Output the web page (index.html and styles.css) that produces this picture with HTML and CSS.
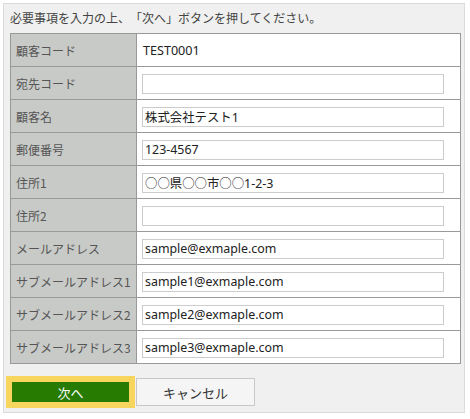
FILE: index.html
```html
<!DOCTYPE html>
<html lang="ja">
<head>
<meta charset="utf-8">
<link rel="stylesheet" href="styles.css">
</head>
<body>
<div class="panel">
  <p class="lead">必要事項を入力の上、「次へ」ボタンを押してください。</p>
  <table class="form">
    <tr><th>顧客コード</th><td><span class="static">TEST0001</span></td></tr>
    <tr><th>宛先コード</th><td><input class="field" type="text" value=""></td></tr>
    <tr><th>顧客名</th><td><input class="field" type="text" value="株式会社テスト1"></td></tr>
    <tr><th>郵便番号</th><td><input class="field" type="text" value="123-4567"></td></tr>
    <tr><th>住所1</th><td><input class="field" type="text" value="○○県○○市○○1-2-3"></td></tr>
    <tr><th>住所2</th><td><input class="field" type="text" value=""></td></tr>
    <tr><th>メールアドレス</th><td><input class="field" type="text" value="sample@exmaple.com"></td></tr>
    <tr><th>サブメールアドレス1</th><td><input class="field" type="text" value="sample1@exmaple.com"></td></tr>
    <tr><th>サブメールアドレス2</th><td><input class="field" type="text" value="sample2@exmaple.com"></td></tr>
    <tr><th>サブメールアドレス3</th><td><input class="field" type="text" value="sample3@exmaple.com"></td></tr>
  </table>
  <div class="actions">
    <button class="btn-next" type="button">次へ</button>
    <button class="btn-cancel" type="button">キャンセル</button>
  </div>
</div>
</body>
</html>
```

FILE: styles.css
```css
* { box-sizing: border-box; }
html, body { margin: 0; padding: 0; background: #ffffff; }
body {
  font-family: "Noto Sans", "Noto Sans CJK JP", sans-serif;
  font-size: 12px;
  color: #333;
  text-spacing-trim: space-all;
}
.panel {
  margin: 3px 0 0 3px;
  width: 462px;
  height: 410px;
  background: #eff0ef;
  border: 1px solid #dadbda;
  padding: 0 0 0 6px;
}
.lead {
  margin: 0;
  height: 29px;
  line-height: 28px;
  color: #444;
  font-family: "Noto Sans CJK JP", sans-serif;
  font-size: 12px;
  text-spacing-trim: space-all;
}
.form {
  border-collapse: collapse;
  width: 451px;
  border: 1px solid #999;
}
.form th, .form td {
  border: 1px solid #999;
  height: 33px;
  padding: 0;
}
.form th {
  width: 126px;
  background: #c8cac7;
  color: #555;
  font-weight: normal;
  text-align: left;
  padding-left: 5px;
  font-family: "Noto Sans CJK JP", sans-serif;
  font-size: 12px;
}
.form td {
  background: #ffffff;
  padding-left: 5px;
}
.static {
  font-size: 12.6px;
  color: #222;
  padding-left: 1px;
}
.field {
  display: block;
  width: 302px;
  height: 20px;
  margin: 1px 0 0 0;
  border: 1px solid #cccccc;
  padding: 0 2px;
  font-family: "Noto Sans", "Noto Sans CJK JP", sans-serif;
  font-size: 12.4px;
  color: #222;
  background: #fff;
  outline: none;
}
.actions {
  display: flex;
  align-items: center;
  margin: 12px 0 0 -4px;
}
.btn-next {
  width: 129px;
  height: 32px;
  border: 6px solid #f8d55c;
  background: #267b00;
  color: #ffffff;
  font-family: "Noto Sans CJK JP", sans-serif;
  font-size: 13px;
  padding: 0;
  margin: 0;
}
.btn-cancel {
  width: 119px;
  height: 28px;
  margin-left: 1px;
  border: 1px solid #c8c8c8;
  background: #f4f5f4;
  color: #333;
  font-family: "Noto Sans CJK JP", sans-serif;
  font-size: 13px;
  padding: 0;
}
```
